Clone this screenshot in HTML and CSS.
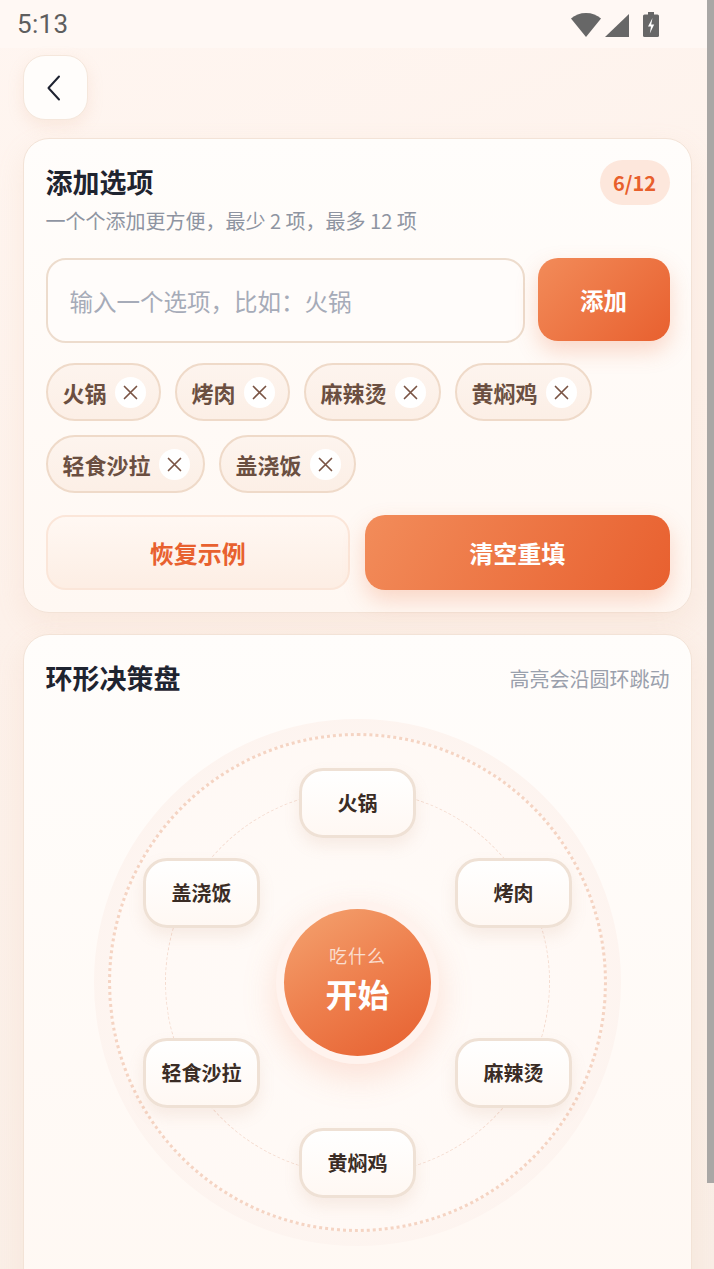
FILE: index.html
```html
<!DOCTYPE html>
<html lang="zh-CN">
<head>
<meta charset="utf-8">
<title>吃什么 - 环形决策盘</title>
<link rel="stylesheet" href="styles.css">
</head>
<body>
<div class="statusbar">
  <span class="time">5:13</span>
  <div class="sys-icons">
    <svg class="ic-wifi" width="30" height="24" viewBox="0 0 30 24"><path d="M15 24 L30 5.5 C26 2 21 0 15 0 C9 0 4 2 0 5.5 Z" fill="#676767"/></svg>
    <svg class="ic-signal" width="24" height="23" viewBox="0 0 24 23"><path d="M0 23 L24 23 L24 0 Z" fill="#676767"/></svg>
    <svg class="ic-battery" width="16" height="25" viewBox="0 0 16 25"><rect x="5" y="0" width="6" height="3" fill="#676767"/><rect x="0" y="2.5" width="16" height="22.5" rx="1.5" fill="#676767"/><path d="M9.5 6 L5 14.5 L8 14.5 L6.8 21.5 L11.2 12.5 L8.2 12.5 Z" fill="#fff"/></svg>
  </div>
</div>

<main class="page">
  <button class="back-btn" aria-label="返回">
    <svg width="18" height="26" viewBox="0 0 18 26"><path d="M14 1.5 L3.5 13 L14 24.5" fill="none" stroke="#1e2230" stroke-width="2" stroke-linecap="round" stroke-linejoin="round"/></svg>
  </button>

  <section class="card card-add">
    <div class="card-head">
      <div class="head-text">
        <h2 class="card-title">添加选项</h2>
        <p class="card-sub">一个个添加更方便，最少 2 项，最多 12 项</p>
      </div>
      <span class="count-badge">6/12</span>
    </div>

    <div class="input-row">
      <input class="opt-input" type="text" placeholder="输入一个选项，比如：火锅">
      <button class="btn-add">添加</button>
    </div>

    <div class="chips">
      <span class="chip">火锅<i class="chip-x"><svg width="15" height="15" viewBox="0 0 15 15"><path d="M1.5 1.5 L13.5 13.5 M13.5 1.5 L1.5 13.5" stroke="#7a5444" stroke-width="1.7" stroke-linecap="round"/></svg></i></span>
      <span class="chip">烤肉<i class="chip-x"><svg width="15" height="15" viewBox="0 0 15 15"><path d="M1.5 1.5 L13.5 13.5 M13.5 1.5 L1.5 13.5" stroke="#7a5444" stroke-width="1.7" stroke-linecap="round"/></svg></i></span>
      <span class="chip">麻辣烫<i class="chip-x"><svg width="15" height="15" viewBox="0 0 15 15"><path d="M1.5 1.5 L13.5 13.5 M13.5 1.5 L1.5 13.5" stroke="#7a5444" stroke-width="1.7" stroke-linecap="round"/></svg></i></span>
      <span class="chip">黄焖鸡<i class="chip-x"><svg width="15" height="15" viewBox="0 0 15 15"><path d="M1.5 1.5 L13.5 13.5 M13.5 1.5 L1.5 13.5" stroke="#7a5444" stroke-width="1.7" stroke-linecap="round"/></svg></i></span>
      <span class="chip">轻食沙拉<i class="chip-x"><svg width="15" height="15" viewBox="0 0 15 15"><path d="M1.5 1.5 L13.5 13.5 M13.5 1.5 L1.5 13.5" stroke="#7a5444" stroke-width="1.7" stroke-linecap="round"/></svg></i></span>
      <span class="chip">盖浇饭<i class="chip-x"><svg width="15" height="15" viewBox="0 0 15 15"><path d="M1.5 1.5 L13.5 13.5 M13.5 1.5 L1.5 13.5" stroke="#7a5444" stroke-width="1.7" stroke-linecap="round"/></svg></i></span>
    </div>

    <div class="action-row">
      <button class="btn-soft">恢复示例</button>
      <button class="btn-primary">清空重填</button>
    </div>
  </section>

  <section class="card card-wheel">
    <div class="wheel-head">
      <h2 class="card-title">环形决策盘</h2>
      <span class="wheel-hint">高亮会沿圆环跳动</span>
    </div>

    <div class="wheel">
      <div class="ring-outer"></div>
      <div class="ring-dotted"></div>
      <div class="ring-inner"></div>

      <div class="node" style="left:263.5px;top:83.5px;">火锅</div>
      <div class="node" style="left:419.5px;top:173.5px;">烤肉</div>
      <div class="node" style="left:419.5px;top:353.5px;">麻辣烫</div>
      <div class="node" style="left:263.5px;top:443.5px;">黄焖鸡</div>
      <div class="node" style="left:107.5px;top:353.5px;">轻食沙拉</div>
      <div class="node" style="left:107.5px;top:173.5px;">盖浇饭</div>

      <div class="start-halo">
        <button class="start-btn">
          <span class="start-sub">吃什么</span>
          <span class="start-main">开始</span>
        </button>
      </div>
    </div>
  </section>
</main>

<div class="scroll-thumb"></div>
</body>
</html>
```

FILE: styles.css
```css
* { box-sizing: border-box; }

html, body {
  margin: 0;
  padding: 0;
  height: 100%;
  overflow: hidden;
}

body {
  font-family: "Noto Sans CJK SC", "Noto Sans", sans-serif;
  background: linear-gradient(160deg, #fff6f1 0%, #fdf1ea 40%, #f9eee6 100%);
  color: #1f2430;
}

button {
  font-family: inherit;
  border: none;
  cursor: pointer;
}

/* status bar */
.statusbar {
  height: 48px;
  display: flex;
  align-items: center;
  justify-content: space-between;
  padding: 0 55px 0 17px;
  background: #fff8f4;
}

.time {
  font-family: Roboto, "Liberation Sans", sans-serif;
  font-size: 26px;
  color: #5e5e5e;
  letter-spacing: 0.3px;
}

.sys-icons {
  display: flex;
  align-items: center;
  gap: 4px;
}

.ic-wifi { margin-top: 2px; }
.ic-signal { margin-top: 2px; }
.ic-battery { margin-left: 10px; }

/* page */
.page {
  padding: 7px 22px 0 23px;
}

.back-btn {
  width: 65px;
  height: 65px;
  border-radius: 22px;
  background: #fffdfb;
  border: 1.5px solid #f5e7dc;
  box-shadow: 0 6px 16px rgba(226, 170, 140, 0.18);
  display: flex;
  align-items: center;
  justify-content: center;
  padding: 0;
}

.back-btn svg { margin-right: 4px; }

.card {
  background: linear-gradient(180deg, #fffdfb 0%, #fff8f3 100%);
  border: 1.5px solid #f3e3d7;
  border-radius: 26px;
  box-shadow: 0 10px 28px rgba(230, 175, 145, 0.14);
  padding: 21px 21.5px 22px;
}

.card-add { margin-top: 18px; }
.card-wheel { margin-top: 21px; padding-bottom: 80px; }

.card-head {
  display: flex;
  justify-content: space-between;
  align-items: flex-start;
}

.card-title {
  margin: 0;
  font-size: 27px;
  line-height: 44px;
  font-weight: 700;
  color: #1f2430;
}

.card-sub {
  margin: 4px 0 0;
  font-size: 20px;
  line-height: 26px;
  color: #8e94a1;
}

.count-badge {
  width: 70px;
  height: 45px;
  border-radius: 23px;
  background: #fde7dc;
  color: #e85f2c;
  font-size: 20px;
  font-weight: 700;
  display: flex;
  align-items: center;
  justify-content: center;
}

.input-row {
  margin-top: 24px;
  display: flex;
  align-items: center;
  gap: 13px;
}

.opt-input {
  flex: 1;
  min-width: 0;
  height: 85px;
  border: 2px solid #eddccd;
  border-radius: 20px;
  background: #fffcfa;
  padding: 0 20px 0 22px;
  font-family: inherit;
  font-size: 23.5px;
  color: #333;
  outline: none;
}

.opt-input::placeholder { color: #a6abb8; }

.btn-add {
  width: 132px;
  height: 83px;
  margin-top: -2px;
  border-radius: 20px;
  background: linear-gradient(135deg, #f28b59 0%, #e8602f 100%);
  color: #fff;
  font-size: 23.5px;
  font-weight: 700;
  box-shadow: 0 10px 22px rgba(236, 110, 60, 0.25);
}

.chips {
  margin-top: 20px;
  display: flex;
  flex-wrap: wrap;
  gap: 14px 14px;
}

.chip {
  height: 58px;
  display: inline-flex;
  align-items: center;
  gap: 8px;
  padding: 0 13px 0 15px;
  border: 2px solid #efdac9;
  border-radius: 29px;
  background: linear-gradient(180deg, #fdf4ee 0%, #fcefe6 100%);
  font-size: 22px;
  font-weight: 700;
  color: #6b4f41;
}

.chip-x {
  width: 31px;
  height: 31px;
  border-radius: 50%;
  background: #fff;
  display: flex;
  align-items: center;
  justify-content: center;
}

.action-row {
  margin-top: 22px;
  display: grid;
  grid-template-columns: 1fr 1fr;
  gap: 15px;
}

.btn-soft,
.btn-primary {
  height: 75px;
  border-radius: 20px;
  font-size: 24px;
  font-weight: 700;
}

.btn-soft {
  background: linear-gradient(180deg, #fff8f3 0%, #fdeee4 100%);
  border: 2px solid #fbe6d9;
  color: #e8612f;
}

.btn-primary {
  background: linear-gradient(120deg, #f28c5a 0%, #e8602f 100%);
  color: #fff;
  box-shadow: 0 10px 22px rgba(236, 110, 60, 0.25);
}

/* wheel card */
.wheel-head {
  display: flex;
  justify-content: space-between;
  align-items: center;
  height: 44px;
}

.wheel-hint {
  font-size: 20px;
  color: #9aa0ac;
}

.wheel {
  position: relative;
  width: 527px;
  height: 527px;
  margin: 19px auto 0;
}

.ring-outer {
  position: absolute;
  inset: 0;
  border-radius: 50%;
  background: radial-gradient(circle, #fffaf7 0%, #fdf3ee 88%, #fcece4 100%);
}

.ring-dotted {
  position: absolute;
  inset: 14px;
  border-radius: 50%;
  border: 3px dotted #f5d4c3;
  background: radial-gradient(circle, #fffbf8 0%, #fff8f4 100%);
}

.ring-inner {
  position: absolute;
  inset: 71px;
  border-radius: 50%;
  border: 1.5px dashed #f4dbcf;
}

.node {
  position: absolute;
  width: 117px;
  height: 70px;
  margin-left: -58.5px;
  margin-top: -35px;
  border: 3px solid #efe1d5;
  border-radius: 24px;
  background: linear-gradient(180deg, #ffffff 0%, #fff8f3 100%);
  box-shadow: 0 8px 16px rgba(190, 140, 110, 0.13);
  display: flex;
  align-items: center;
  justify-content: center;
  font-size: 20px;
  font-weight: 700;
  color: #3a2c25;
}

.start-halo {
  position: absolute;
  left: 50%;
  top: 50%;
  width: 163px;
  height: 163px;
  margin: -81.5px 0 0 -81.5px;
  border-radius: 50%;
  background: #fff3ee;
  box-shadow: 0 12px 34px rgba(240, 130, 90, 0.22);
  display: flex;
  align-items: center;
  justify-content: center;
}

.start-btn {
  width: 147px;
  height: 147px;
  border-radius: 50%;
  background: linear-gradient(150deg, #f4a370 0%, #ee7f4d 50%, #e65f2f 100%);
  color: #fff;
  display: flex;
  flex-direction: column;
  align-items: center;
  justify-content: center;
  padding: 0 0 8px;
}

.start-sub {
  display: block;
  font-size: 18px;
  letter-spacing: 1px;
  color: rgba(255, 255, 255, 0.72);
  line-height: 26px;
}

.start-main {
  display: block;
  font-size: 32px;
  font-weight: 700;
  line-height: 46px;
  margin-top: 2px;
}

.scroll-thumb {
  position: fixed;
  right: 0;
  top: 0;
  width: 7px;
  height: 1183px;
  background: #a9a7a5;
}
```
